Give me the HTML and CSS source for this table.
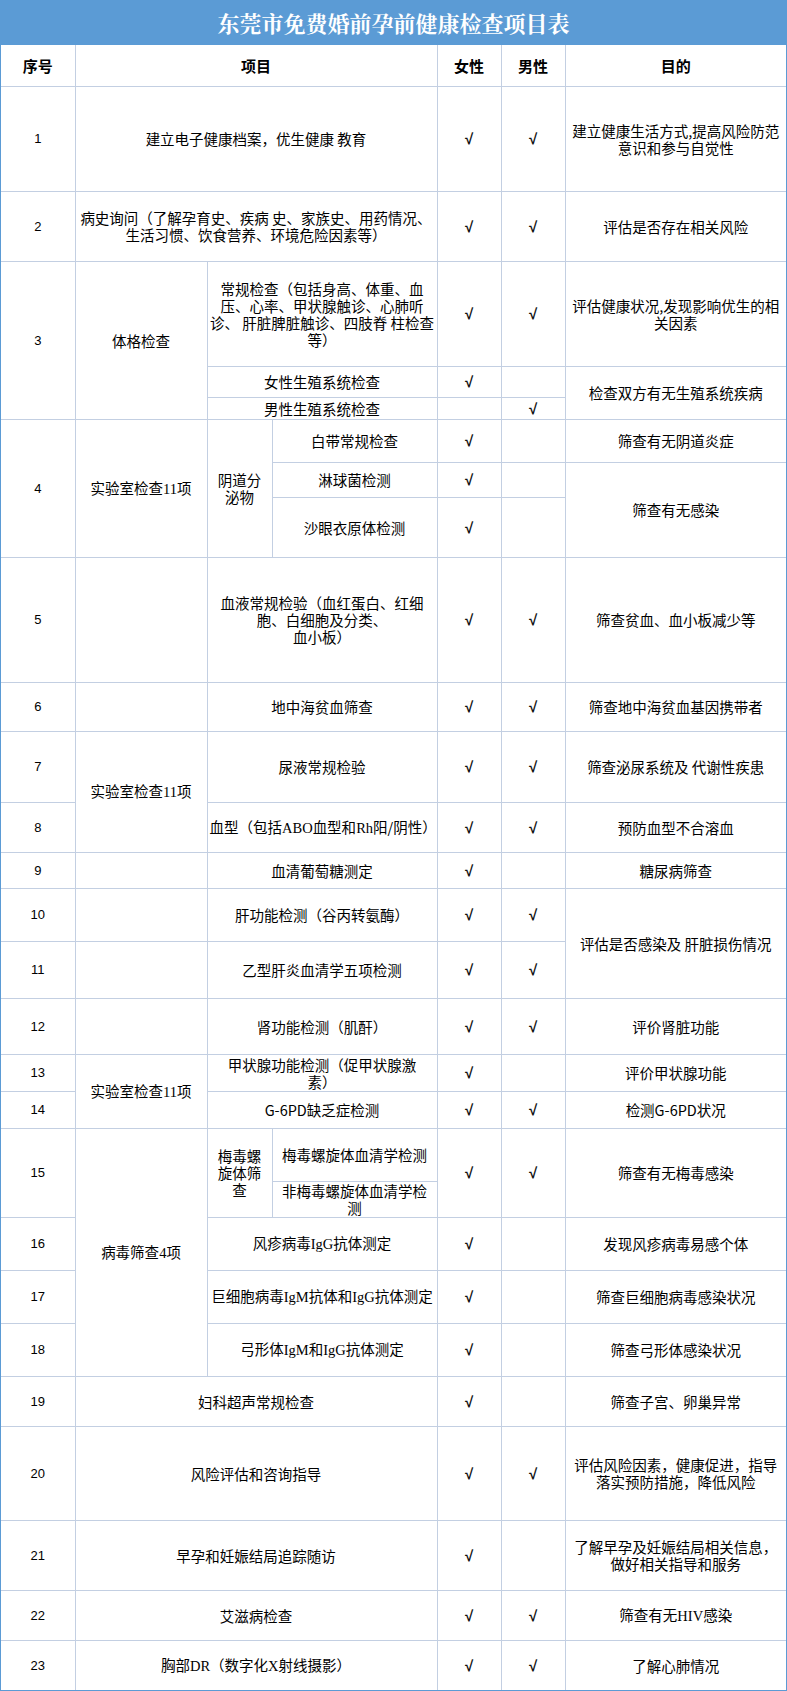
FILE: index.html
```html
<!DOCTYPE html>
<html lang="zh-CN">
<head>
<meta charset="utf-8">
<title>东莞市免费婚前孕前健康检查项目表</title>
<link rel="stylesheet" href="styles.css">
</head>
<body>
<div class="sheet">
  <div class="title">东莞市免费婚前孕前健康检查项目表</div>
  <div class="grid">
    <table>
      <colgroup>
        <col class="w1"><col class="w2"><col class="w3"><col class="w4"><col class="w5"><col class="w6"><col class="w7">
      </colgroup>
      <tr class="h41 head">
        <th class="f">序号</th><th colspan="3">项目</th><th>女性</th><th>男性</th><th class="p">目的</th>
      </tr>
      <tr class="h105">
        <td class="f n">1</td><td colspan="3">建立电子健康档案，优生健康 教育</td><td class="ck">√</td><td class="ck">√</td><td class="p"><span class="ln">建立健康生活方式,提高风险防范</span><span class="ln">意识和参与自觉性</span></td>
      </tr>
      <tr class="h70">
        <td class="f n">2</td><td colspan="3"><span class="ln">病史询问（了解孕育史、疾病 史、家族史、用药情况、</span><span class="ln">生活习惯、饮食营养、环境危险因素等）</span></td><td class="ck">√</td><td class="ck">√</td><td class="p">评估是否存在相关风险</td>
      </tr>
      <tr class="h105">
        <td class="f n" rowspan="3">3</td><td rowspan="3">体格检查</td><td colspan="2"><span class="ln">常规检查（包括身高、体重、血</span><span class="ln">压、心率、甲状腺触诊、心肺听</span><span class="ln">诊、 肝脏脾脏触诊、四肢脊 柱检查</span><span class="ln">等）</span></td><td class="ck">√</td><td class="ck">√</td><td class="p"><span class="ln">评估健康状况,发现影响优生的相</span><span class="ln">关因素</span></td>
      </tr>
      <tr class="h31">
        <td colspan="2">女性生殖系统检查</td><td class="ck">√</td><td></td><td class="p" rowspan="2">检查双方有无生殖系统疾病</td>
      </tr>
      <tr class="h22">
        <td colspan="2">男性生殖系统检查</td><td></td><td class="ck">√</td>
      </tr>
      <tr class="h43">
        <td class="f n" rowspan="3">4</td><td rowspan="3">实验室检查<span class="s">11</span>项</td><td rowspan="3"><span class="ln">阴道分</span><span class="ln">泌物</span></td><td>白带常规检查</td><td class="ck">√</td><td></td><td class="p">筛查有无阴道炎症</td>
      </tr>
      <tr class="h35">
        <td>淋球菌检测</td><td class="ck">√</td><td></td><td class="p" rowspan="2">筛查有无感染</td>
      </tr>
      <tr class="h60">
        <td>沙眼衣原体检测</td><td class="ck">√</td><td></td>
      </tr>
      <tr class="h125">
        <td class="f n">5</td><td></td><td colspan="2"><span class="ln">血液常规检验（血红蛋白、红细</span><span class="ln">胞、白细胞及分类、</span><span class="ln">血小板）</span></td><td class="ck">√</td><td class="ck">√</td><td class="p">筛查贫血、血小板减少等</td>
      </tr>
      <tr class="h49">
        <td class="f n">6</td><td></td><td colspan="2">地中海贫血筛查</td><td class="ck">√</td><td class="ck">√</td><td class="p">筛查地中海贫血基因携带者</td>
      </tr>
      <tr class="h71">
        <td class="f n">7</td><td rowspan="2">实验室检查<span class="s">11</span>项</td><td colspan="2">尿液常规检验</td><td class="ck">√</td><td class="ck">√</td><td class="p">筛查泌尿系统及 代谢性疾患</td>
      </tr>
      <tr class="h50">
        <td class="f n">8</td><td colspan="2">血型（包括<span class="s">ABO</span>血型和<span class="s">Rh</span>阳/阴性）</td><td class="ck">√</td><td class="ck">√</td><td class="p">预防血型不合溶血</td>
      </tr>
      <tr class="h36">
        <td class="f n">9</td><td></td><td colspan="2">血清葡萄糖测定</td><td class="ck">√</td><td></td><td class="p">糖尿病筛查</td>
      </tr>
      <tr class="h53">
        <td class="f n">10</td><td></td><td colspan="2">肝功能检测（谷丙转氨酶）</td><td class="ck">√</td><td class="ck">√</td><td class="p" rowspan="2">评估是否感染及 肝脏损伤情况</td>
      </tr>
      <tr class="h57">
        <td class="f n">11</td><td></td><td colspan="2">乙型肝炎血清学五项检测</td><td class="ck">√</td><td class="ck">√</td>
      </tr>
      <tr class="h56">
        <td class="f n">12</td><td></td><td colspan="2">肾功能检测（肌酐）</td><td class="ck">√</td><td class="ck">√</td><td class="p">评价肾脏功能</td>
      </tr>
      <tr class="h37">
        <td class="f n">13</td><td rowspan="2">实验室检查<span class="s">11</span>项</td><td colspan="2"><span class="ln">甲状腺功能检测（促甲状腺激</span><span class="ln">素）</span></td><td class="ck">√</td><td></td><td class="p">评价甲状腺功能</td>
      </tr>
      <tr class="h37">
        <td class="f n">14</td><td colspan="2">G-6PD缺乏症检测</td><td class="ck">√</td><td class="ck">√</td><td class="p">检测G-6PD状况</td>
      </tr>
      <tr class="h53">
        <td class="f n" rowspan="2">15</td><td rowspan="5">病毒筛查<span class="s">4</span>项</td><td rowspan="2"><span class="ln">梅毒螺</span><span class="ln">旋体筛</span><span class="ln">查</span></td><td>梅毒螺旋体血清学检测</td><td class="ck" rowspan="2">√</td><td class="ck" rowspan="2">√</td><td class="p" rowspan="2">筛查有无梅毒感染</td>
      </tr>
      <tr class="h36">
        <td><span class="ln">非梅毒螺旋体血清学检</span><span class="ln">测</span></td>
      </tr>
      <tr class="h53">
        <td class="f n">16</td><td colspan="2">风疹病毒<span class="s">IgG</span>抗体测定</td><td class="ck">√</td><td></td><td class="p">发现风疹病毒易感个体</td>
      </tr>
      <tr class="h53">
        <td class="f n">17</td><td colspan="2">巨细胞病毒<span class="s">IgM</span>抗体和<span class="s">IgG</span>抗体测定</td><td class="ck">√</td><td></td><td class="p">筛查巨细胞病毒感染状况</td>
      </tr>
      <tr class="h53">
        <td class="f n">18</td><td colspan="2">弓形体<span class="s">IgM</span>和<span class="s">IgG</span>抗体测定</td><td class="ck">√</td><td></td><td class="p">筛查弓形体感染状况</td>
      </tr>
      <tr class="h50">
        <td class="f n">19</td><td colspan="3">妇科超声常规检查</td><td class="ck">√</td><td></td><td class="p">筛查子宫、卵巢异常</td>
      </tr>
      <tr class="h94">
        <td class="f n">20</td><td colspan="3">风险评估和咨询指导</td><td class="ck">√</td><td class="ck">√</td><td class="p"><span class="ln">评估风险因素，健康促进，指导</span><span class="ln">落实预防措施，降低风险</span></td>
      </tr>
      <tr class="h70">
        <td class="f n">21</td><td colspan="3">早孕和妊娠结局追踪随访</td><td class="ck">√</td><td></td><td class="p"><span class="ln">了解早孕及妊娠结局相关信息，</span><span class="ln">做好相关指导和服务</span></td>
      </tr>
      <tr class="h50">
        <td class="f n">22</td><td colspan="3">艾滋病检查</td><td class="ck">√</td><td class="ck">√</td><td class="p">筛查有无<span class="s">HIV</span>感染</td>
      </tr>
      <tr class="h50 last">
        <td class="f n">23</td><td colspan="3">胸部<span class="s">DR</span>（数字化<span class="s">X</span>射线摄影）</td><td class="ck">√</td><td class="ck">√</td><td class="p">了解心肺情况</td>
      </tr>
    </table>
  </div>
</div>
</body>
</html>
```

FILE: styles.css
```css
html, body {
  margin: 0;
  padding: 0;
  background: #ffffff;
}

body {
  font-family: "Noto Sans CJK SC", "Noto Sans", sans-serif;
  color: #000000;
}

.sheet {
  width: 787px;
}

.title {
  height: 45px;
  background: #5b9bd5;
  color: #ffffff;
  font-family: "Noto Serif CJK SC", "Noto Sans CJK SC", serif;
  font-weight: bold;
  font-size: 22px;
  display: flex;
  align-items: center;
  justify-content: center;
}

.grid {
  border: 1px solid #5b9bd5;
  border-top: 0;
  width: 785px;
}

table {
  border-collapse: collapse;
  table-layout: fixed;
  width: 785px;
  font-size: 14.5px;
  line-height: 17px;
}

.w1 { width: 74px; }
.w2 { width: 132px; }
.w3 { width: 65px; }
.w4 { width: 165px; }
.w5 { width: 64px; }
.w6 { width: 64px; }
.w7 { width: 221px; }

th, td {
  border: 1px solid #c3cfe2;
  padding: 0 2px;
  text-align: center;
  vertical-align: middle;
  white-space: nowrap;
  overflow: visible;
}

th {
  font-weight: bold;
  font-size: 15px;
  border-top: 0;
}

.ln {
  display: block;
  height: 17px;
  line-height: 17px;
}

.f { border-left: 0; }
.p { border-right: 0; }
.last td { border-bottom: 0; }

.n {
  font-family: "Liberation Sans", Arial, sans-serif;
  font-size: 13px;
}

.ck {
  font-family: "Liberation Sans", Arial, sans-serif;
  font-weight: bold;
  font-size: 15px;
  color: #111111;
}

.s {
  font-family: "Liberation Serif", "Times New Roman", serif;
}

.h22 { height: 22px; }
.h31 { height: 31px; }
.h35 { height: 35px; }
.h36 { height: 36px; }
.h37 { height: 37px; }
.h41 { height: 41px; }
.h43 { height: 43px; }
.h49 { height: 49px; }
.h50 { height: 50px; }
.h53 { height: 53px; }
.h56 { height: 56px; }
.h57 { height: 57px; }
.h60 { height: 60px; }
.h70 { height: 70px; }
.h71 { height: 71px; }
.h94 { height: 94px; }
.h105 { height: 105px; }
.h125 { height: 125px; }
```
